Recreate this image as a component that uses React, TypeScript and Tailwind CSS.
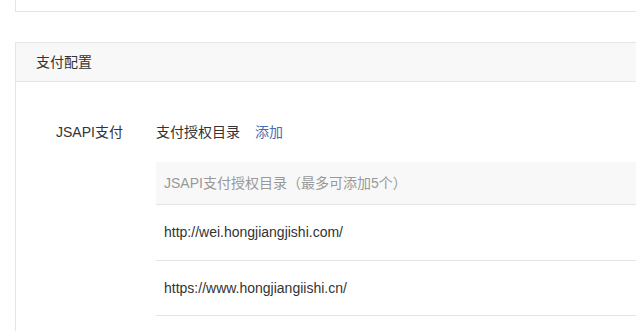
export default function App() {
  const font = { fontFamily: '"Liberation Sans", Arial, "Noto Sans CJK SC", sans-serif' };
  return (
    <div className="w-[636px] h-[331px] overflow-hidden bg-white text-[14px] text-[#333]" style={font}>
      <div className="pl-[15px]">
        <div className="h-[12px] w-[700px] border-l border-b border-[#e5e5e5]" />
        <div className="mt-[30px] w-[700px] border-l border-t border-[#e5e5e5]">
          <div className="h-[39px] bg-[#f8f8f8] border-b border-[#e5e5e5] flex items-center pl-[20px]">
            支付配置
          </div>
          <div className="flex pt-[40px] pb-[20px]">
            <div className="w-[140px] pl-[40px] leading-[20px]">JSAPI支付</div>
            <div className="flex-1">
              <div className="flex items-center h-[20px] leading-[20px]">
                <span>支付授权目录</span>
                <span className="ml-[15px] text-[#4a6bb5]">添加</span>
              </div>
              <div className="mt-[20px]">
                <div className="h-[43px] bg-[#f8f8f8] border-b border-[#e5e5e5] flex items-center pl-[8px] text-[#999]">
                  JSAPI支付授权目录（最多可添加5个）
                </div>
                <div className="h-[56px] border-b border-[#e5e5e5] flex items-center pl-[8px]">
                  http://wei.hongjiangjishi.com/
                </div>
                <div className="h-[55px] border-b border-[#e5e5e5] flex items-center pl-[8px]">
                  https://www.hongjiangiishi.cn/
                </div>
              </div>
            </div>
          </div>
        </div>
      </div>
    </div>
  );
}
